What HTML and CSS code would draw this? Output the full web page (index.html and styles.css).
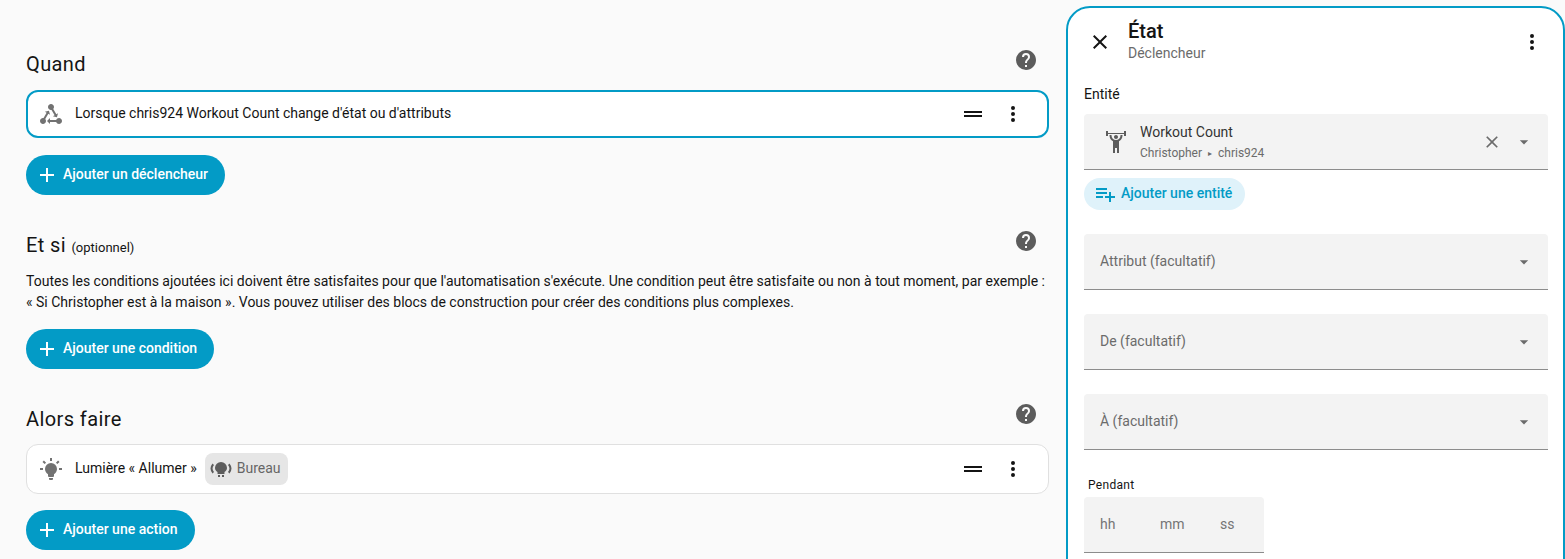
FILE: index.html
```html
<!DOCTYPE html>
<html lang="fr">
<head>
<meta charset="utf-8">
<title>Automatisation</title>
<link rel="stylesheet" href="styles.css">
</head>
<body>
<div class="page">
  <main class="main">
    <section class="section first">
      <div class="head">
        <h2 class="title">Quand</h2>
        <svg class="help" viewBox="0 0 24 24"><path d="M15.07,11.25L14.17,12.17C13.45,12.89 13,13.5 13,15H11V14.5C11,13.39 11.45,12.39 12.17,11.67L13.41,10.41C13.78,10.05 14,9.55 14,9C14,7.89 13.1,7 12,7A2,2 0 0,0 10,9H8A4,4 0 0,1 12,5A4,4 0 0,1 16,9C16,9.88 15.64,10.67 15.07,11.25M13,19H11V17H13M12,2A10,10 0 0,0 2,12A10,10 0 0,0 12,22C17.53,22 22,17.5 22,12C22,6.47 17.5,2 12,2Z"/></svg>
      </div>
      <div class="row selected">
        <svg class="row-icon" viewBox="0 0 24 24"><path d="M6.27 17.05C6.72 17.58 7 18.25 7 19C7 20.66 5.66 22 4 22S1 20.66 1 19 2.34 16 4 16C4.18 16 4.36 16 4.53 16.05L7.6 10.69L5.86 9.7L9.95 8.65L11 12.74L9.33 11.78L6.27 17.05M20 16C18.7 16 17.6 16.84 17.18 18H11V16L8 19L11 22V20H17.18C17.6 21.16 18.7 22 20 22C21.66 22 23 20.66 23 19S21.66 16 20 16M12 8C12.18 8 12.36 8 12.53 7.95L15.6 13.31L13.86 14.3L17.95 15.35L19 11.26L17.33 12.22L14.27 6.95C14.72 6.42 15 5.75 15 5C15 3.34 13.66 2 12 2S9 3.34 9 5 10.34 8 12 8Z"/></svg>
        <span class="row-text">Lorsque chris924 Workout Count change d'état ou d'attributs</span>
        <svg class="drag" viewBox="0 0 24 24"><path d="M21 11H3V9H21V11M21 13H3V15H21V13Z"/></svg>
        <svg class="dots" viewBox="0 0 24 24"><path d="M12,16A2,2 0 0,1 14,18A2,2 0 0,1 12,20A2,2 0 0,1 10,18A2,2 0 0,1 12,16M12,10A2,2 0 0,1 14,12A2,2 0 0,1 12,14A2,2 0 0,1 10,12A2,2 0 0,1 12,10M12,4A2,2 0 0,1 14,6A2,2 0 0,1 12,8A2,2 0 0,1 10,6A2,2 0 0,1 12,4Z"/></svg>
      </div>
      <button class="add"><svg viewBox="0 0 24 24"><path d="M19,13H13V19H11V13H5V11H11V5H13V11H19V13Z"/></svg>Ajouter un déclencheur</button>
    </section>

    <section class="section second">
      <div class="head">
        <h2 class="title">Et si <small class="optional">(optionnel)</small></h2>
        <svg class="help" viewBox="0 0 24 24"><path d="M15.07,11.25L14.17,12.17C13.45,12.89 13,13.5 13,15H11V14.5C11,13.39 11.45,12.39 12.17,11.67L13.41,10.41C13.78,10.05 14,9.55 14,9C14,7.89 13.1,7 12,7A2,2 0 0,0 10,9H8A4,4 0 0,1 12,5A4,4 0 0,1 16,9C16,9.88 15.64,10.67 15.07,11.25M13,19H11V17H13M12,2A10,10 0 0,0 2,12A10,10 0 0,0 12,22C17.53,22 22,17.5 22,12C22,6.47 17.5,2 12,2Z"/></svg>
      </div>
      <p class="desc">Toutes les conditions ajoutées ici doivent être satisfaites pour que l'automatisation s'exécute. Une condition peut être satisfaite ou non à tout moment, par exemple : « Si Christopher est à la maison ». Vous pouvez utiliser des blocs de construction pour créer des conditions plus complexes.</p>
      <button class="add"><svg viewBox="0 0 24 24"><path d="M19,13H13V19H11V13H5V11H11V5H13V11H19V13Z"/></svg>Ajouter une condition</button>
    </section>

    <section class="section third">
      <div class="head">
        <h2 class="title">Alors faire</h2>
        <svg class="help" viewBox="0 0 24 24"><path d="M15.07,11.25L14.17,12.17C13.45,12.89 13,13.5 13,15H11V14.5C11,13.39 11.45,12.39 12.17,11.67L13.41,10.41C13.78,10.05 14,9.55 14,9C14,7.89 13.1,7 12,7A2,2 0 0,0 10,9H8A4,4 0 0,1 12,5A4,4 0 0,1 16,9C16,9.88 15.64,10.67 15.07,11.25M13,19H11V17H13M12,2A10,10 0 0,0 2,12A10,10 0 0,0 12,22C17.53,22 22,17.5 22,12C22,6.47 17.5,2 12,2Z"/></svg>
      </div>
      <div class="row plain">
        <svg class="row-icon" viewBox="0 0 24 24"><path d="M12,6A6,6 0 0,1 18,12C18,14.22 16.79,16.16 15,17.2V19A1,1 0 0,1 14,20H10A1,1 0 0,1 9,19V17.2C7.21,16.16 6,14.22 6,12A6,6 0 0,1 12,6M14,21V22A1,1 0 0,1 13,23H11A1,1 0 0,1 10,22V21H14M20,11H23V13H20V11M1,11H4V13H1V11M13,1V4H11V1H13M4.92,3.5L7.05,5.64L5.63,7.05L3.5,4.93L4.92,3.5M16.95,5.63L19.07,3.5L20.5,4.93L18.37,7.05L16.95,5.63Z"/></svg>
        <span class="action-text">Lumière « Allumer »</span>
        <span class="chip">
          <svg viewBox="0 0 24 24"><path d="M12 5A6 6 0 0 0 6 11C6 12.800 7 14.200 8.500 15V16.500A.5.5 0 0 0 9 17H15A.5.5 0 0 0 15.500 16.500V15C17 14.200 18 12.800 18 11A6 6 0 0 0 12 5M9 18H11V20H9V18M13 18H15V20H13V18M3.500 6.500L5 8A5.500 5.500 0 0 0 5 15L3.500 16.500A8 8 0 0 1 3.500 6.500M20.500 6.500L19 8A5.500 5.500 0 0 1 19 15L20.500 16.500A8 8 0 0 0 20.500 6.500Z"/></svg>
          <span class="chip-text">Bureau</span>
        </span>
        <svg class="drag" viewBox="0 0 24 24"><path d="M21 11H3V9H21V11M21 13H3V15H21V13Z"/></svg>
        <svg class="dots" viewBox="0 0 24 24"><path d="M12,16A2,2 0 0,1 14,18A2,2 0 0,1 12,20A2,2 0 0,1 10,18A2,2 0 0,1 12,16M12,10A2,2 0 0,1 14,12A2,2 0 0,1 12,14A2,2 0 0,1 10,12A2,2 0 0,1 12,10M12,4A2,2 0 0,1 14,6A2,2 0 0,1 12,8A2,2 0 0,1 10,6A2,2 0 0,1 12,4Z"/></svg>
      </div>
      <button class="add"><svg viewBox="0 0 24 24"><path d="M19,13H13V19H11V13H5V11H11V5H13V11H19V13Z"/></svg>Ajouter une action</button>
    </section>
  </main>

  <aside class="panel">
    <header class="panel-head">
      <svg class="close" viewBox="0 0 24 24"><path d="M19,6.41L17.59,5L12,10.59L6.41,5L5,6.41L10.59,12L5,17.59L6.41,19L12,13.41L17.59,19L19,17.59L13.41,12L19,6.41Z"/></svg>
      <div class="panel-titles">
        <div class="panel-title">État</div>
        <div class="panel-sub">Déclencheur</div>
      </div>
      <svg class="dots" viewBox="0 0 24 24"><path d="M12,16A2,2 0 0,1 14,18A2,2 0 0,1 12,20A2,2 0 0,1 10,18A2,2 0 0,1 12,16M12,10A2,2 0 0,1 14,12A2,2 0 0,1 12,14A2,2 0 0,1 10,12A2,2 0 0,1 12,10M12,4A2,2 0 0,1 14,6A2,2 0 0,1 12,8A2,2 0 0,1 10,6A2,2 0 0,1 12,4Z"/></svg>
    </header>
    <div class="panel-body">
      <div class="label">Entité</div>
      <div class="entity">
        <svg class="entity-icon" viewBox="0 0 24 24"><path d="M12 5C10.89 5 10 5.89 10 7S10.89 9 12 9 14 8.11 14 7 13.11 5 12 5M22 1V6H20V4H4V6H2V1H4V3H20V1H22M15 11.26V23H13V18H11V23H9V11.26C6.93 10.17 5.5 8 5.5 5.5L5.5 5H7.5L7.5 5.5C7.5 8 9.5 10 12 10S16.5 8 16.5 5.5L16.5 5H18.5L18.5 5.5C18.5 8 17.07 10.17 15 11.26Z"/></svg>
        <div class="entity-text">
          <div class="entity-name">Workout Count</div>
          <div class="entity-path">Christopher<span class="sep">▸</span>chris924</div>
        </div>
        <svg class="clear" viewBox="0 0 24 24"><path d="M19,6.41L17.59,5L12,10.59L6.41,5L5,6.41L10.59,12L5,17.59L6.41,19L12,13.41L17.59,19L19,17.59L13.41,12L19,6.41Z"/></svg>
        <svg class="caret" viewBox="0 0 24 24"><path d="M7,10L12,15L17,10H7Z"/></svg>
      </div>
      <button class="add-entity"><svg viewBox="0 0 24 24"><path d="M3 16H10V14H3M18 14V10H16V14H12V16H16V20H18V16H22V14M14 6H3V8H14M14 10H3V12H14V10Z"/></svg>Ajouter une entité</button>
      <div class="select"><span>Attribut (facultatif)</span><svg class="caret" viewBox="0 0 24 24"><path d="M7,10L12,15L17,10H7Z"/></svg></div>
      <div class="select"><span>De (facultatif)</span><svg class="caret" viewBox="0 0 24 24"><path d="M7,10L12,15L17,10H7Z"/></svg></div>
      <div class="select"><span>À (facultatif)</span><svg class="caret" viewBox="0 0 24 24"><path d="M7,10L12,15L17,10H7Z"/></svg></div>
      <div class="duration-label">Pendant</div>
      <div class="duration"><span class="hh">hh</span><span class="mm">mm</span><span>ss</span></div>
    </div>
  </aside>
</div>
</body>
</html>
```
FILE: styles.css
```css
* { box-sizing: border-box; }
html, body { margin: 0; height: 559px; overflow: hidden; }
body { background: #fafafa; color: #141414; font-family: Roboto, sans-serif; font-size: 14px; }
svg { display: block; fill: currentColor; flex: none; }
.page { display: flex; height: 559px; overflow: hidden; }
.main { width: 1066px; flex: none; padding: 0 17px 0 26px; }
.section { display: flex; flex-direction: column; align-items: flex-start; }
.first { padding-top: 48px; }
.second { padding-top: 35px; }
.third { padding-top: 34px; }
.head { display: flex; justify-content: space-between; align-items: flex-start; width: 100%; height: 30px; padding-right: 11px; margin-bottom: 12px; }
.title { margin: 0; font-size: 20px; font-weight: 400; line-height: 32px; letter-spacing: 0.4px; }
.second .title { line-height: 30px; }
.optional { font-size: 13px; letter-spacing: 0; }
.help { width: 24px; height: 24px; color: #5c5c5c; }
.second .help, .third .help { margin-top: -1px; }
.row { display: flex; align-items: center; width: 100%; background: #fff; }
.selected { height: 48px; border: 2px solid #039bc6; border-radius: 12px; padding: 0 22px 0 11px; }
.plain { height: 50px; border: 1px solid #e0e0e0; border-radius: 12px; padding: 0 23px 0 12px; }
.row-icon { width: 24px; height: 24px; color: #727272; }
.row-text, .action-text { margin-left: 12px; margin-bottom: 2px; }
.row-text { flex: 1; }
.chip { display: flex; align-items: center; gap: 4px; height: 32px; margin-left: 8px; margin-right: auto; padding: 0 7px 0 4px; border-radius: 8px; background: #e6e6e6; color: #666; }
.chip svg { width: 24px; height: 24px; color: #5c5c5c; }
.chip-text { margin-bottom: 2px; }
.drag { width: 24px; height: 24px; }
.dots { width: 24px; height: 24px; margin-left: 16px; }
.add { display: flex; align-items: center; height: 40px; margin-top: 17px; padding: 0 17px 2px 9px; border: 0; border-radius: 20px; background: #039bc6; color: #fff; font: 500 14px Roboto, sans-serif; }
.add svg { width: 24px; height: 24px; margin-right: 4px; margin-top: 2px; }
.desc { margin: -1px 0 0; font-size: 14px; line-height: 21px; width: 100%; }
.second .add { margin-top: 16px; }
.third .head { margin-bottom: 11px; }
.third .add { margin-top: 16px; }
.panel { flex: none; width: 499px; height: 620px; margin-top: 6px; background: #fff; border: 2px solid #039bc6; border-radius: 24px; }
.panel-head { display: flex; align-items: center; height: 62px; padding: 0 19px 0 20px; }
.close { width: 24px; height: 24px; margin-top: 6px; }
.panel-titles { flex: 1; margin-left: 16px; }
.panel-title { font-size: 20px; font-weight: 500; line-height: 24px; margin-top: 3px; }
.panel-sub { font-size: 14px; line-height: 20px; color: #6b6b6b; }
.panel-head .dots { margin-top: 6px; }
.panel-body { padding: 0 15px 0 16px; }
.label { font-size: 14px; line-height: 20px; margin-top: 14px; margin-bottom: 10px; }
.entity { display: flex; align-items: center; height: 56px; background: #f3f3f3; border-bottom: 1px solid #8c8c8c; border-radius: 4px 4px 0 0; padding: 0 14px 0 20px; }
.entity-icon { width: 24px; height: 24px; color: #5c5c5c; }
.entity-text { flex: 1; margin-left: 12px; padding-top: 3px; }
.entity-name { font-size: 14px; line-height: 20px; color: #333; }
.entity-path { font-size: 12px; line-height: 20px; margin-top: 1px; color: #6b6b6b; }
.sep { font-size: 8px; vertical-align: 1px; margin: 0 6px 0 6px; }
.clear { width: 20px; height: 20px; color: #6b6b6b; }
.caret { width: 20px; height: 20px; color: #6b6b6b; }
.entity .caret { margin-left: 12px; }
.add-entity { display: flex; align-items: center; height: 32px; margin-top: 8px; padding: 0 13px 2px 9px; border: 0; border-radius: 16px; background: #dff2fa; color: #039bc6; font: 500 14px Roboto, sans-serif; }
.add-entity svg { width: 24px; height: 24px; margin-right: 4px; margin-top: 2px; }
.select { display: flex; align-items: center; justify-content: space-between; height: 56px; margin-top: 24px; padding: 0 14px 0 16px; background: #f3f3f3; border-bottom: 1px solid #8c8c8c; border-radius: 4px 4px 0 0; color: #6b6b6b; }
.select span { margin-bottom: 2px; }
.duration-label { font-size: 12px; line-height: 16px; margin-top: 27px; padding-left: 4px; letter-spacing: 0.3px; }
.duration { display: flex; align-items: center; width: 180px; height: 56px; margin-top: 4px; padding: 0 0 2px 16px; background: #f3f3f3; border-bottom: 1px solid #8c8c8c; border-radius: 4px 4px 0 0; color: #757575; }
.hh { width: 60px; }
.mm { width: 60px; }
```
